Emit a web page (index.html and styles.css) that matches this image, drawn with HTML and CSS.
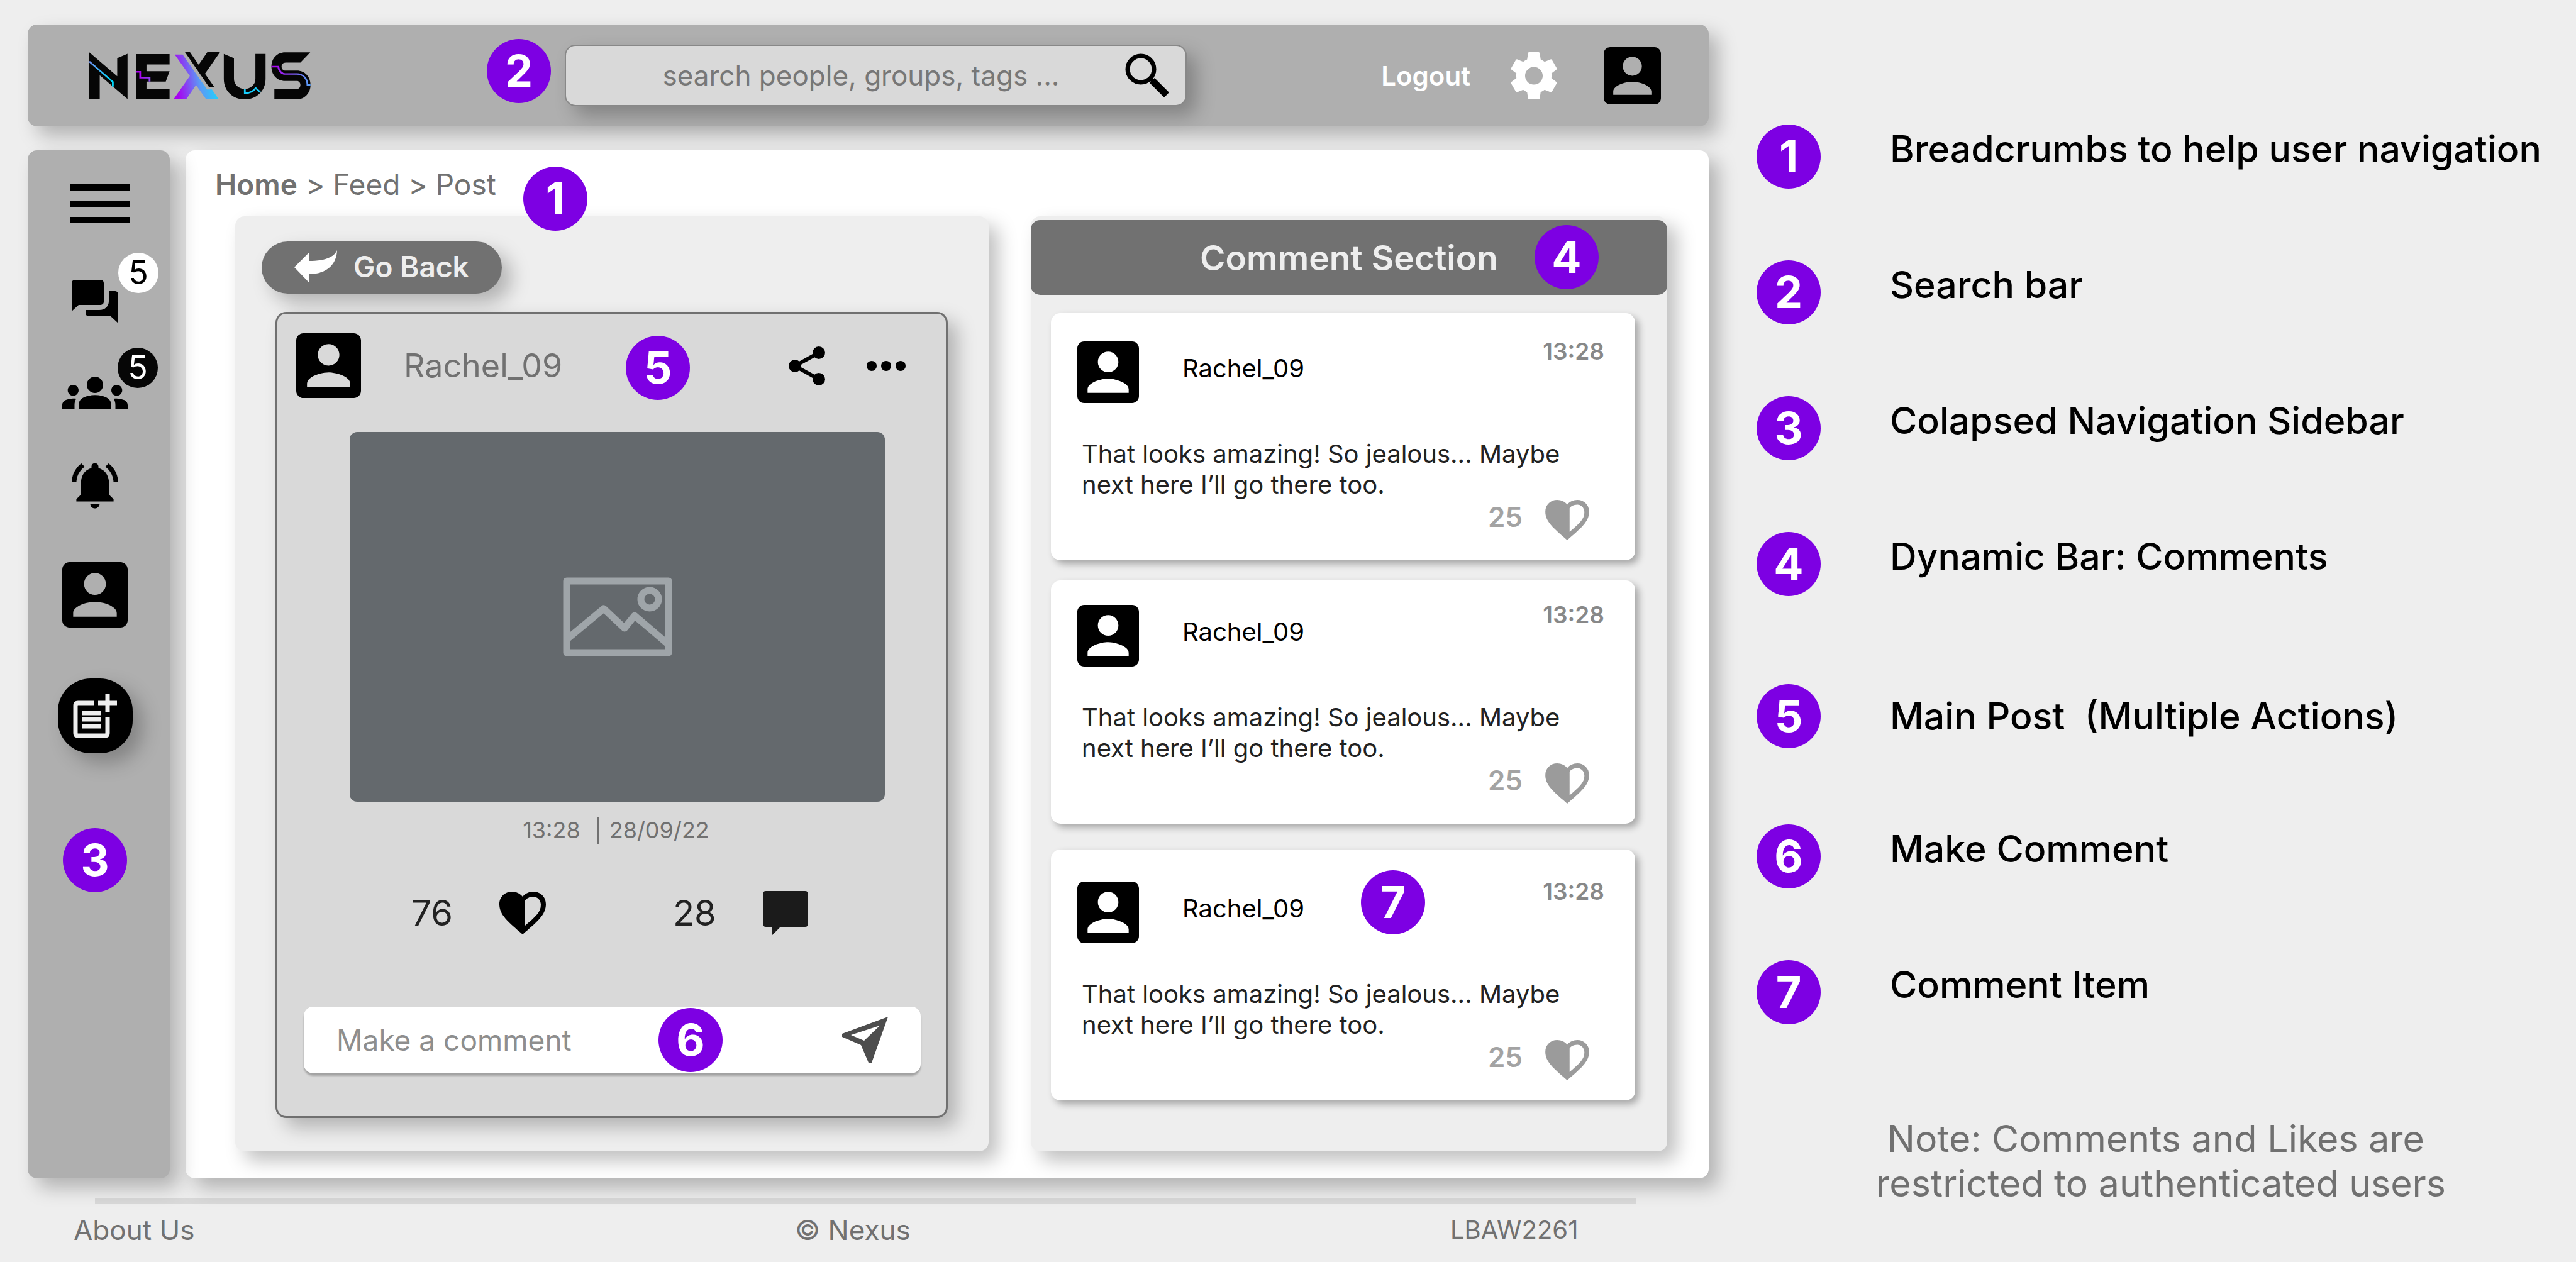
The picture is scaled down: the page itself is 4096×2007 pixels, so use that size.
FILE: index.html
```html
<!DOCTYPE html>
<html lang="en">
<head>
<meta charset="utf-8">
<meta name="viewport" content="width=device-width, initial-scale=1">
<title>Nexus - Post</title>
<link rel="stylesheet" href="styles.css">
</head>
<body>
<svg class="defs" aria-hidden="true">
  <symbol id="account" viewBox="3 3 18 18"><path d="M3 5v14a2 2 0 0 0 2 2h14c1.1 0 2-.9 2-2V5c0-1.1-.9-2-2-2H5a2 2 0 0 0-2 2zm12 4c0 1.660-1.340 3-3 3s-3-1.340-3-3 1.340-3 3-3 3 1.340 3 3zm-9 8c0-2 4-3.100 6-3.100s6 1.100 6 3.100v1H6v-1z"/></symbol>
  <symbol id="heart" viewBox="0 0 74 68"><path fill-rule="evenodd" d="M37 68C14 48 0 37 0 20C0 8 9 0 20 0C27 0 33 3 37 8C41 3 47 0 54 0C65 0 74 8 74 20C74 37 60 48 37 68ZM41 54C57 40 66 33 66 21C66 13 60 8 54 8C48 8 43 11 41 14Z"/></symbol>
</svg>

<div class="page">
  <div class="app">
    <header class="topbar">
      <a class="logo" href="#" aria-label="Nexus">
        <svg viewBox="34 78 1506 371" preserveAspectRatio="none">
          <defs>
            <linearGradient id="gx" gradientUnits="userSpaceOnUse" x1="640" y1="440" x2="910" y2="400"><stop offset="0" stop-color="#a800f0"/><stop offset=".6" stop-color="#5a9cf6"/><stop offset="1" stop-color="#1ed2fd"/></linearGradient>
            <linearGradient id="gn" gradientUnits="userSpaceOnUse" x1="34" y1="150" x2="180" y2="300"><stop offset="0" stop-color="#7290f5"/><stop offset="1" stop-color="#00d8fb"/></linearGradient>
            <linearGradient id="ge" gradientUnits="userSpaceOnUse" x1="380" y1="260" x2="450" y2="300"><stop offset="0" stop-color="#aa00f0"/><stop offset="1" stop-color="#8a4cf2"/></linearGradient>
            <linearGradient id="gs" gradientUnits="userSpaceOnUse" x1="1290" y1="0" x2="1530" y2="0"><stop offset="0" stop-color="#ab00f0"/><stop offset="1" stop-color="#5aa0f8"/></linearGradient>
          </defs>
          <g fill="#060606">
            <path d="M34 84L224 270V129L294 95V447L105 262V447H34Z"/>
            <path d="M353 97H580V178H423V231H580L554 311H423V369H580V448H353Z"/>
            <path d="M682 78H716L778 180L839 79H925L821 250L886 356H850Z"/>
            <path d="M949 96L1018 129V290C1018 335 1052 368 1091 368S1164 335 1164 290V96H1233V290C1233 385 1170 449 1091 449S949 385 949 290Z"/>
            <path d="M1537 84L1470 163H1370C1353 163 1342 177 1342 195S1353 226 1370 226H1446C1500 226 1539 275 1539 337S1500 449 1446 449H1293V369H1446C1460 369 1470 355 1470 337S1460 306 1446 306H1366C1312 306 1273 260 1273 195S1312 84 1366 84Z"/>
          </g>
          <path fill="url(#gx)" d="M615 101H669L835 372H868L915 449H829L760 338L693 449H607L718 267Z"/>
          <g fill="none" stroke-width="12">
            <path stroke="url(#gn)" d="M34 155L194 313V350"/>
            <path stroke="url(#ge)" d="M353 235H380V281H444V311"/>
            <path stroke="#16cdfb" d="M1092 368V401C1125 401 1150 385 1166 362L1196 392"/>
            <path stroke="url(#gs)" d="M1273 195H1320C1322 228 1345 252 1366 252H1446C1490 252 1518 290 1518 338H1539"/>
          </g>
        </svg>
      </a>
      <div class="search">
        <span class="marker marker-search">2</span>
        <input class="search-input" type="search" placeholder="search people, groups, tags ..." aria-label="Search">
        <button class="search-button" type="button" aria-label="Search">
          <svg viewBox="0 0 70 70" fill="none" stroke="#000"><circle cx="25" cy="25" r="21" stroke-width="7"/><path stroke-width="6" d="M38 38L46 46"/><path stroke-width="11" d="M43 43L66 66"/></svg>
        </button>
      </div>
      <a class="logout" href="#">Logout</a>
      <button class="gear" type="button" aria-label="Settings">
        <svg viewBox="2 2 20 20"><path fill="#fff" d="M19.140 12.940c.04-.3.060-.61.060-.94 0-.32-.02-.64-.07-.94l2.030-1.580a.49.49 0 0 0 .12-.61l-1.920-3.320a.488.488 0 0 0-.59-.22l-2.390.96c-.5-.38-1.030-.7-1.620-.94l-.36-2.540a.484.484 0 0 0-.48-.41h-3.840c-.24 0-.43.17-.47.41l-.36 2.540c-.59.24-1.130.57-1.620.94l-2.390-.96c-.22-.08-.47 0-.59.22L2.740 8.870c-.12.21-.08.47.12.61l2.030 1.580c-.05.3-.09.63-.09.94s.02.64.07.94l-2.030 1.580a.49.49 0 0 0-.12.61l1.920 3.320c.12.22.37.29.59.22l2.390-.96c.5.38 1.030.7 1.620.94l.36 2.540c.05.24.24.41.48.41h3.840c.24 0 .44-.17.47-.41l.36-2.540c.59-.24 1.130-.56 1.620-.94l2.390.96c.22.08.47 0 .59-.22l1.920-3.320c.12-.22.07-.47-.12-.61l-2.010-1.580zM12 15.600c-1.980 0-3.600-1.620-3.600-3.600s1.620-3.600 3.600-3.600 3.600 1.620 3.600 3.600-1.620 3.600-3.600 3.600z"/></svg>
      </button>
      <a class="top-account" href="#" aria-label="Profile"><svg><use href="#account"/></svg></a>
    </header>

    <div class="workspace">
      <nav class="sidebar" aria-label="Main">
        <button class="menu" type="button" aria-label="Open menu"><svg viewBox="0 0 94 62"><path d="M0 0H94V10H0ZM0 26H94V36H0ZM0 52H94V62H0Z"/></svg></button>
        <div class="nav-items">
          <a class="nav-chat" href="#" aria-label="Messages">
            <svg viewBox="0 0 74 69"><path d="M5 0H46a5 5 0 0 1 5 5V35a5 5 0 0 1-5 5H11L0 50V5a5 5 0 0 1 5-5ZM59 18H69a5 5 0 0 1 5 5V69L62 58H27a5 5 0 0 1-5-5V48H44C53 48 59 42 59 34Z"/></svg>
            <span class="count count-light">5</span>
          </a>
          <a class="nav-groups" href="#" aria-label="Groups">
            <svg viewBox="0 6 24 12"><path d="M12 12.750c1.630 0 3.070.39 4.240.9 1.080.48 1.760 1.560 1.760 2.730V18H6v-1.610c0-1.180.68-2.260 1.760-2.730 1.170-.52 2.610-.91 4.240-.91zM4 13c1.100 0 2-.9 2-2s-.9-2-2-2-2 .9-2 2 .9 2 2 2zm1.130 1.100c-.37-.06-.74-.1-1.130-.1-.99 0-1.930.21-2.780.58A2.010 2.010 0 0 0 0 16.430V18h4.500v-1.610c0-.83.23-1.610.63-2.290zM20 13c1.100 0 2-.9 2-2s-.9-2-2-2-2 .9-2 2 .9 2 2 2zm4 3.430c0-.81-.48-1.530-1.220-1.850A6.950 6.950 0 0 0 20 14c-.39 0-.76.04-1.130.1.4.68.63 1.460.63 2.290V18H24v-1.570zM12 6c1.660 0 3 1.340 3 3s-1.340 3-3 3-3-1.340-3-3 1.340-3 3-3z"/></svg>
            <span class="count count-dark">5</span>
          </a>
          <a class="nav-bell" href="#" aria-label="Notifications">
            <svg viewBox="2 2.500 20 19.500"><path d="M7.580 4.080L6.150 2.650C3.750 4.480 2.170 7.300 2.030 10.500h2c.15-2.650 1.510-4.970 3.550-6.420zm12.390 6.420h2c-.15-3.200-1.730-6.020-4.120-7.850l-1.420 1.430c2.020 1.450 3.390 3.770 3.540 6.420zM18 11c0-3.070-1.640-5.640-4.500-6.320V4c0-.83-.67-1.500-1.500-1.500s-1.500.67-1.500 1.500v.68C7.630 5.360 6 7.920 6 11v5l-2 2v1h16v-1l-2-2v-5zm-6 11c.14 0 .27-.01.4-.04.65-.14 1.180-.58 1.440-1.180.1-.24.15-.5.15-.78h-4c.01 1.100.9 2 2.010 2z"/></svg>
          </a>
          <a class="nav-account" href="#" aria-label="Profile"><svg><use href="#account"/></svg></a>
        </div>
        <button class="compose" type="button" aria-label="New post">
          <svg viewBox="0 0 70 70" fill="none" stroke="#eee" stroke-width="7"><path d="M33 14H8Q4 14 4 18V62Q4 66 8 66H51Q55 66 55 62V36"/><path d="M40 14H70M55 0V29M15 30H44M15 40H44M15 51H44"/></svg>
        </button>
        <span class="marker">3</span>
      </nav>

      <main class="content">
        <nav class="breadcrumb" aria-label="Breadcrumb">
          <a class="crumb-home" href="#">Home</a>&nbsp;&gt;&nbsp;<a href="#">Feed</a>&nbsp;&gt;&nbsp;<span>Post</span>
          <span class="marker marker-breadcrumb">1</span>
        </nav>

        <div class="panels">
          <section class="panel post-panel">
            <button class="back" type="button">
              <svg viewBox="0 0 68 51"><path fill="#fff" d="M0 27L23 4V17C45 17 62 13 68 0C67 24 50 38 23 38V51Z"/></svg>
              <span>Go Back</span>
            </button>

            <article class="post">
              <header class="post-head">
                <svg class="post-avatar" aria-hidden="true"><use href="#account"/></svg>
                <span class="post-author">Rachel_09</span>
                <button class="share" type="button" aria-label="Share">
                  <svg viewBox="0 0 58 62"><path d="M48 10L10 31L48 52" fill="none" stroke="#000" stroke-width="6"/><circle cx="48" cy="10" r="10"/><circle cx="10" cy="31" r="10"/><circle cx="48" cy="52" r="10"/></svg>
                </button>
                <button class="more" type="button" aria-label="More">
                  <svg viewBox="0 0 62 16"><circle cx="8" cy="8" r="8"/><circle cx="31" cy="8" r="8"/><circle cx="54" cy="8" r="8"/></svg>
                </button>
                <span class="marker marker-post">5</span>
              </header>
              <div class="post-media">
                <svg viewBox="0 0 174 126" fill="none" stroke="#9fa5a9" stroke-width="11" stroke-linejoin="round"><rect x="6" y="6" width="162" height="114"/><circle cx="138" cy="35" r="14"/><path d="M6 99L65 50L98 81L114 61L168 107"/></svg>
              </div>
              <p class="post-date"><time>13:28</time><time class="post-day">28/09/22</time></p>
              <div class="post-actions">
                <button class="action" type="button"><span>76</span><svg class="action-heart" aria-hidden="true"><use href="#heart"/></svg></button>
                <button class="action" type="button"><span>28</span><svg class="action-bubble" viewBox="0 0 72 71" aria-hidden="true"><path fill="#1b1b1b" d="M5 0H67q5 0 5 5V52q0 5-5 5H28L14 71V57H5q-5 0-5-5V5q0-5 5-5z"/></svg></button>
              </div>
              <form class="reply">
                <input class="reply-input" type="text" placeholder="Make a comment" aria-label="Make a comment">
                <button class="send" type="button" aria-label="Send"><svg viewBox="0 0 74 74"><path fill="#4d4d4d" fill-rule="evenodd" d="M74 0L48 73H43L31 45L1 32V27ZM61 14L15 29L36 38Z"/></svg></button>
                <span class="marker marker-reply">6</span>
              </form>
            </article>
          </section>

          <section class="panel comments">
            <h2 class="comments-title">Comment Section<span class="marker marker-comments">4</span></h2>
            <div class="comment-list">
              <article class="comment">
                <header class="comment-head"><svg class="comment-avatar" aria-hidden="true"><use href="#account"/></svg><span class="comment-author">Rachel_09</span><time class="comment-time">13:28</time></header>
                <p class="comment-text">That looks amazing! So jealous... Maybe next here I’ll go there too.</p>
                <button class="like" type="button"><span>25</span><svg aria-hidden="true"><use href="#heart"/></svg></button>
              </article>
              <article class="comment">
                <header class="comment-head"><svg class="comment-avatar" aria-hidden="true"><use href="#account"/></svg><span class="comment-author">Rachel_09</span><time class="comment-time">13:28</time></header>
                <p class="comment-text">That looks amazing! So jealous... Maybe next here I’ll go there too.</p>
                <button class="like" type="button"><span>25</span><svg aria-hidden="true"><use href="#heart"/></svg></button>
              </article>
              <article class="comment">
                <header class="comment-head"><svg class="comment-avatar" aria-hidden="true"><use href="#account"/></svg><span class="comment-author">Rachel_09</span><time class="comment-time">13:28</time></header>
                <p class="comment-text">That looks amazing! So jealous... Maybe next here I’ll go there too.</p>
                <button class="like" type="button"><span>25</span><svg aria-hidden="true"><use href="#heart"/></svg></button>
                <span class="marker marker-comment">7</span>
              </article>
            </div>
          </section>
        </div>
      </main>
    </div>

    <footer class="footer">
      <hr class="footer-rule">
      <div class="footer-row">
        <a href="#">About Us</a>
        <span>© Nexus</span>
        <span class="footer-code">LBAW2261</span>
      </div>
    </footer>
  </div>

  <aside class="legend">
    <ol class="legend-list">
      <li><span class="marker">1</span><span class="legend-label">Breadcrumbs to help user navigation</span></li>
      <li><span class="marker">2</span><span class="legend-label">Search bar</span></li>
      <li><span class="marker">3</span><span class="legend-label">Colapsed Navigation Sidebar</span></li>
      <li><span class="marker">4</span><span class="legend-label">Dynamic Bar: Comments</span></li>
      <li><span class="marker">5</span><span class="legend-label legend-label-centered">Main Post  (Multiple Actions)</span></li>
      <li><span class="marker">6</span><span class="legend-label">Make Comment</span></li>
      <li><span class="marker">7</span><span class="legend-label">Comment Item</span></li>
    </ol>
    <p class="legend-note">Note: Comments and Likes are&nbsp;<br>restricted to authenticated users</p>
  </aside>
</div>
</body>
</html>
```
FILE: styles.css
```css
:root {
  --bg: #eee;
  --bar: #afafaf;
  --dark: #717171;
  --accent: #7d00e3;
  --shadow: 15px 15px 30px rgba(0, 0, 0, .25);
  --radius: 15px;
}

* { box-sizing: border-box; }

body {
  margin: 0;
  background: var(--bg);
  color: #000;
  font-family: Inter, "Liberation Sans", sans-serif;
  font-size: 44px;
}

h2, p, ol { margin: 0; padding: 0; }
ol { list-style: none; }
a { color: inherit; text-decoration: none; }
svg { display: block; flex: none; }
button, input { border: 0; padding: 0; background: none; color: inherit; font: inherit; }
button { display: flex; flex: none; cursor: pointer; }
input { min-width: 0; outline: 0; }
.defs { position: absolute; width: 0; height: 0; }

.page {
  display: grid;
  grid-template-columns: 2673fr 1303fr;
  column-gap: 76px;
  min-height: 100vh;
  padding: 39px 0 0 44px;
}

.app { min-width: 0; }

/* Numbered annotation */
.marker {
  display: flex;
  flex: none;
  align-items: center;
  justify-content: center;
  width: 102px;
  height: 102px;
  border-radius: 50%;
  background: var(--accent);
  color: #fff;
  font-size: 70px;
  font-weight: 700;
  line-height: 1;
}

/* Top bar */
.topbar {
  display: flex;
  align-items: center;
  height: 162px;
  padding: 0 76px 0 98px;
  border-radius: var(--radius);
  background: var(--bar);
  box-shadow: var(--shadow);
}
.logo svg { width: 352px; height: 76px; }
.search {
  position: relative;
  display: flex;
  align-items: center;
  flex: 0 0 989px;
  height: 98px;
  margin-left: 404px;
  padding: 0 26px 0 49px;
  border: 2px solid #888;
  border-radius: 17px;
  background: #d9d9d9;
  box-shadow: var(--shadow);
}
.search-input { flex: 1; text-align: center; font-size: 44px; appearance: none; }
.search-input::-webkit-search-cancel-button { display: none; }
.search-input::placeholder { color: #777; opacity: 1; }
.search-button svg { width: 70px; height: 70px; }
.marker-search { position: absolute; left: -126px; top: -11px; }
.logout { margin-left: auto; color: #fff; font-size: 42px; font-weight: 600; }
.gear { margin: 0 72px 0 62px; }
.gear svg { width: 78px; height: 79px; }
.top-account svg { width: 91px; height: 91px; }

.workspace {
  display: grid;
  grid-template-columns: 226px 1fr;
  column-gap: 25px;
  margin-top: 38px;
}

/* Sidebar */
.sidebar {
  position: relative;
  z-index: 1;
  display: flex;
  flex-direction: column;
  align-items: center;
  padding: 54px 12px 0 0;
  border-radius: var(--radius);
  background: var(--bar);
  box-shadow: var(--shadow);
}
.menu { margin: 0 0 90px 16px; }
.menu svg { width: 94px; height: 62px; }
.nav-items { display: flex; flex-direction: column; align-items: center; gap: 85px; }
.nav-items a { position: relative; }
.nav-chat svg { width: 74px; height: 69px; }
.nav-groups svg { width: 104px; height: 52px; }
.nav-bell svg { width: 74px; height: 73px; }
.nav-account svg { width: 104px; height: 104px; }
.count {
  position: absolute;
  display: flex;
  align-items: center;
  justify-content: center;
  width: 64px;
  height: 64px;
  border-radius: 50%;
  font-size: 52px;
  line-height: 1;
}
.count-light { top: -43px; right: -64px; background: #fff; color: #000; }
.count-dark { top: -46px; right: -48px; background: #060606; color: #fff; }
.compose {
  align-items: center;
  justify-content: center;
  width: 119px;
  height: 119px;
  margin: 81px 0 119px;
  border-radius: 52px;
  background: #000;
  box-shadow: var(--shadow);
}
.compose svg { width: 70px; height: 70px; }

/* Content area */
.content {
  padding: 26px 66px 43px 47px;
  border-radius: var(--radius);
  background: #fff;
  box-shadow: var(--shadow);
}
.breadcrumb {
  position: relative;
  z-index: 1;
  display: flex;
  width: fit-content;
  color: var(--dark);
  font-size: 46px;
  line-height: 56px;
}
.crumb-home { font-weight: 600; }
.marker-breadcrumb { position: absolute; left: calc(100% + 43px); top: 0; }
.panels {
  display: grid;
  grid-template-columns: 1198fr 1012fr;
  column-gap: 67px;
  margin: 23px 0 0 32px;
}
.panel { border-radius: var(--radius); background: var(--bg); box-shadow: var(--shadow); }

/* Post */
.post-panel { padding: 40px 65px 53px 42px; }
.back {
  align-items: center;
  gap: 26px;
  width: 382px;
  height: 83px;
  padding: 0 0 4px 52px;
  border-radius: 42px;
  background: var(--dark);
  color: #eee;
  font-size: 46px;
  font-weight: 600;
  box-shadow: var(--shadow);
}
.back svg { width: 68px; height: 51px; }
.post {
  margin: 29px 0 0 22px;
  padding-bottom: 68px;
  border: 3px solid #707070;
  border-radius: 17px;
  background: #d9d9d9;
  box-shadow: var(--shadow);
}
.post-head {
  position: relative;
  display: flex;
  align-items: center;
  padding: 31px 64px 0 30px;
}
.post-avatar { width: 103px; height: 103px; }
.post-author { margin-left: 68px; color: var(--dark); font-size: 52px; }
.share { margin: 0 66px 0 auto; }
.share svg { width: 58px; height: 62px; }
.more svg { width: 62px; height: 16px; }
.marker-post { position: absolute; left: 554px; top: 35px; }
.post-media {
  display: flex;
  align-items: center;
  justify-content: center;
  aspect-ratio: 851 / 588;
  margin: 54px 97px 0 115px;
  border-radius: 12px;
  background: #64696d;
}
.post-media svg { width: 174px; height: 126px; }
.post-date {
  display: flex;
  justify-content: center;
  margin: 24px 0 0 14px;
  color: var(--dark);
  font-size: 36px;
  line-height: 43px;
}
.post-day { margin-left: 27px; padding-left: 16px; border-left: 3px solid var(--dark); }
.post-actions { display: flex; justify-content: center; gap: 202px; margin: 73px 6px 0 0; }
.action { align-items: center; gap: 74px; height: 74px; color: #222; font-size: 56px; }
.action-heart { width: 74px; height: 68px; fill: #000; }
.action-bubble { width: 72px; height: 71px; }
.reply {
  position: relative;
  display: flex;
  align-items: center;
  height: 106px;
  margin: 112px 40px 0 42px;
  padding: 0 52px;
  border-radius: var(--radius);
  background: #fff;
  box-shadow: 0 4px 3px rgba(0, 0, 0, .25);
}
.reply-input { flex: 1; font-size: 46px; }
.reply-input::placeholder { color: #8e8e8e; opacity: 1; }
.send svg { width: 74px; height: 74px; }
.marker-reply { position: absolute; left: 564px; top: 2px; }

/* Comments */
.comments { padding-top: 6px; }
.comments-title {
  position: relative;
  display: flex;
  align-items: center;
  justify-content: center;
  height: 119px;
  border-radius: var(--radius);
  background: var(--dark);
  color: #eee;
  font-size: 55px;
  font-weight: 600;
}
.marker-comments { position: absolute; right: 109px; top: 8px; }
.comment-list {
  display: grid;
  grid-template-rows: 393px 387px auto;
  row-gap: 32px;
  margin: 29px 51px 0 32px;
}
.comment {
  position: relative;
  display: flex;
  flex-direction: column;
  justify-content: flex-end;
  padding: 0 49px 32px 42px;
  border-radius: var(--radius);
  background: #fff;
  box-shadow: 6px 6px 12px rgba(0, 0, 0, .3);
}
.comment:last-child { height: 399px; margin-top: 9px; }
.comment-head { display: flex; align-items: flex-start; }
.comment-avatar { width: 98px; height: 98px; }
.comment-author { margin-left: 69px; font-size: 40px; line-height: 86px; }
.comment-time { margin-left: auto; color: #888; font-size: 37px; font-weight: 600; line-height: 32px; }
.comment-text { margin: 56px 0 0 7px; color: #222; font-size: 40px; line-height: 49px; }
.like {
  align-self: flex-end;
  gap: 36px;
  margin-right: 24px;
  color: #a3a3a3;
  font-weight: 600;
  line-height: 54px;
}
.like svg { width: 70px; height: 64px; fill: #9b9b9b; }
.marker-comment { position: absolute; left: 493px; top: 33px; }

/* Footer */
.footer-rule { height: 9px; margin: 32px 115px 0 107px; border: 0; background: #d9d9d9; }
.footer-row {
  display: grid;
  grid-template-columns: 1147fr 1042fr 411fr;
  align-items: center;
  margin-top: 14px;
  padding-left: 73px;
  color: var(--dark);
  line-height: 54px;
}
.footer-code { font-size: 40px; }

/* Legend */
.legend { min-width: 0; padding-top: 159px; }
.legend-list { display: grid; grid-template-rows: 216px 216px 216px 242px 223px 216px 102px; }
.legend-list li { display: flex; gap: 110px; height: 102px; }
.legend-label {
  align-self: center;
  padding-bottom: 25px;
  font-size: 59px;
  font-weight: 500;
  line-height: 70px;
  white-space: pre;
}
.legend-label-centered { padding-bottom: 0; }
.legend-note {
  margin-top: 146px;
  padding-right: 17px;
  color: #707070;
  font-size: 59px;
  line-height: 71px;
  text-align: center;
}
```
